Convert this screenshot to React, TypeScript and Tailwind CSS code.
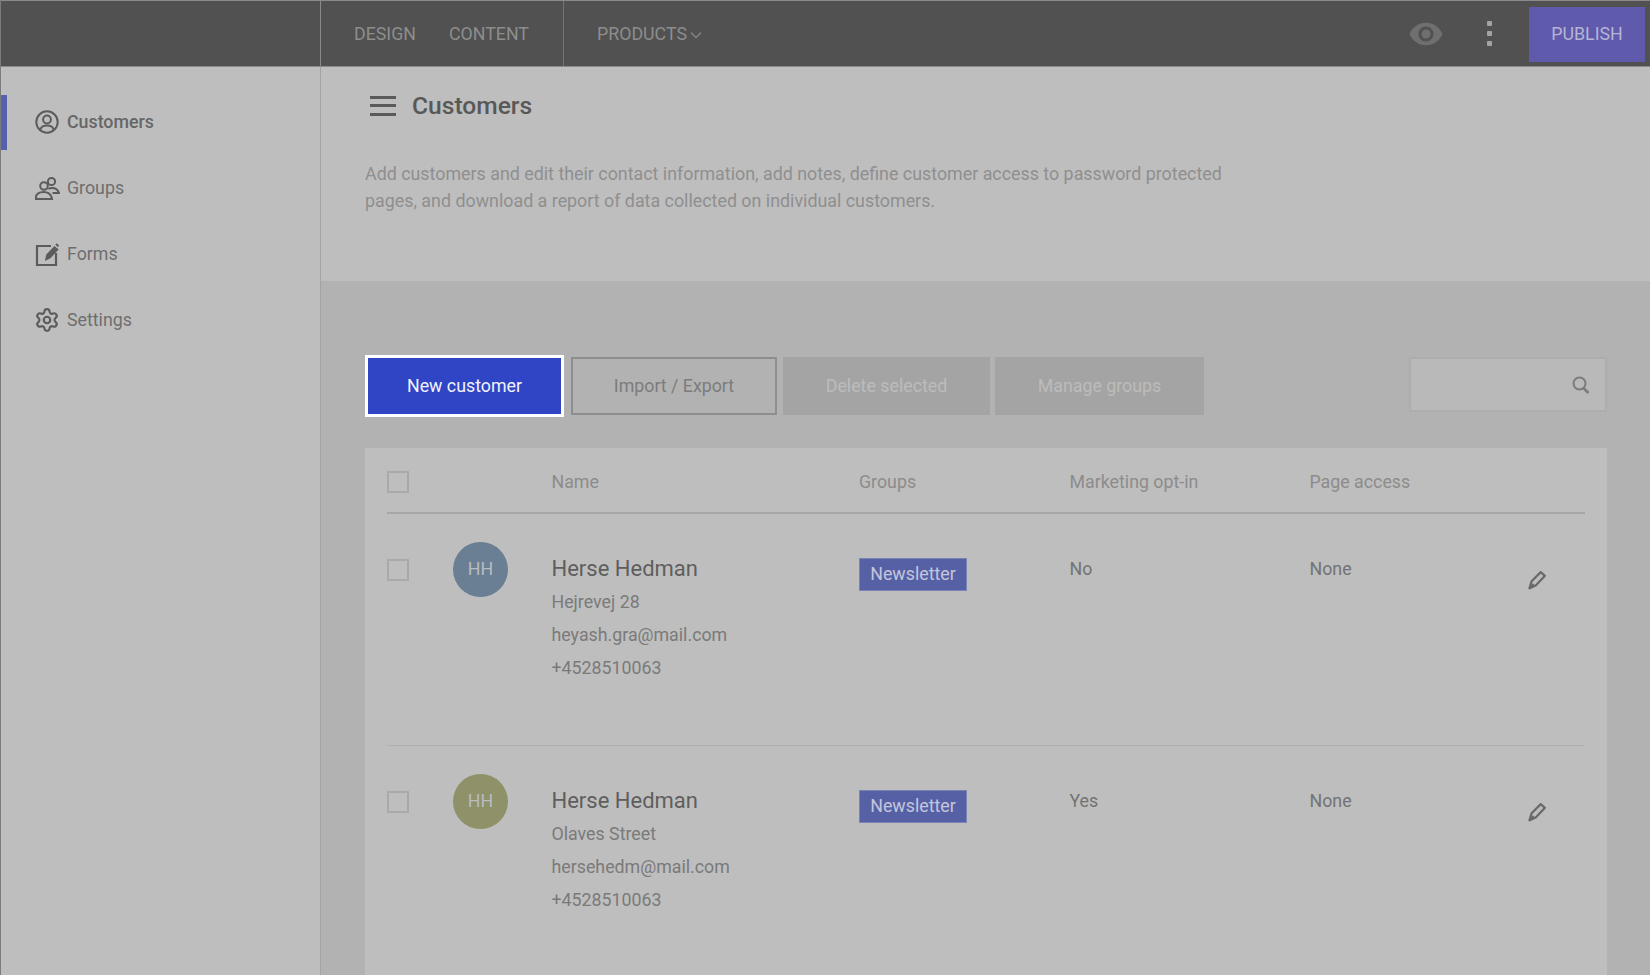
import React from "react";
import { Settings } from "lucide-react";

function CustomerIcon() {
  return (
    <svg width="24" height="24" viewBox="0 0 24 24" fill="none" stroke="#5c5c5c" strokeWidth="2" className="-mt-[2px]">
      <circle cx="12" cy="12" r="10.700" />
      <circle cx="12" cy="9.500" r="3.900" />
      <path d="M5.500 19.500c.6-2.800 3-4 6.500-4s5.900 1.200 6.500 4" />
    </svg>
  );
}
function GroupIcon() {
  return (
    <svg width="25" height="24" viewBox="0 0 25 24" fill="none" stroke="#5c5c5c" strokeWidth="2" className="-mt-[2px]">
      <circle cx="9" cy="10" r="3.800" />
      <circle cx="16.500" cy="5.500" r="3.600" />
      <path d="M1 23v-1.500c0-3.500 3.200-5.500 7.500-5.500s7 1.500 8.200 5.500l.3 1.500zM13.500 13c1-.8 1.800-1 3.500-1 3.500 0 6 1.800 7 5h-6.500" />
    </svg>
  );
}
function FormIcon() {
  return (
    <svg width="25" height="24" viewBox="0 0 25 24" fill="none" stroke="#5c5c5c" strokeWidth="2.200" className="-mt-[2px]">
      <path d="M16 4H2v19h19V11" />
      <path d="M11 17.500l1-4.500 7.500-8 3 2.500-7.500 8z" fill="#5c5c5c" strokeWidth="1.600" />
      <path d="M21 2l2.500 2.200" strokeWidth="2" />
    </svg>
  );
}
function Pencil() {
  return (
    <svg width="20" height="20" viewBox="0 0 24 24" fill="none" stroke="#6a6a6a" strokeWidth="2.700" strokeLinejoin="round">
      <path d="M3 22l2.500-8.500L16.500 2.500l5 4.500L10.500 18.500z" />
      <path d="M3 22l5-5" />
    </svg>
  );
}
function SearchIcon() {
  return (
    <svg width="18" height="18" viewBox="0 0 18 18" fill="none" stroke="#7c7c7c" strokeWidth="2">
      <circle cx="7.500" cy="7.500" r="6" />
      <path d="M11.500 12l5 5" strokeWidth="2.600" />
    </svg>
  );
}
function Eye() {
  return (
    <svg width="36" height="36" viewBox="0 0 24 24" fill="#6f6f6f">
      <path d="M12 4.500C7 4.500 2.730 7.610 1 12c1.730 4.390 6 7.500 11 7.500s9.270-3.110 11-7.500c-1.730-4.390-6-7.500-11-7.500zM12 17c-2.760 0-5-2.240-5-5s2.240-5 5-5 5 2.240 5 5-2.240 5-5 5zm0-8c-1.660 0-3 1.340-3 3s1.340 3 3 3 3-1.340 3-3-1.340-3-3-3z" />
    </svg>
  );
}

function Checkbox() {
  return <div className="h-[22px] w-[22px] shrink-0 border-2 border-[#a9a9a9]" />;
}

const rows = [
  { color: "bg-[#6a7f93]", addr: "Hejrevej 28", mail: "heyash.gra@mail.com", opt: "No" },
  { color: "bg-[#8f9168]", addr: "Olaves Street", mail: "hersehedm@mail.com", opt: "Yes" },
];

function Row({ r, last }: { r: (typeof rows)[number]; last: boolean }) {
  return (
    <div className={`flex h-[232px] items-start ${last ? "" : "border-b border-[#b0b0b0]"}`}>
      <div className="mt-[45px] w-[66px] shrink-0">
        <Checkbox />
      </div>
      <div
        className={`mt-[28px] flex h-[55px] w-[55px] shrink-0 items-center justify-center rounded-full text-[17.800px] text-[#b9bcc0] ${r.color}`}
      >
        HH
      </div>
      <div className="ml-[43.500px] mt-[38px] w-[307.500px] shrink-0 text-[17.800px] text-[#7a7a7a]">
        <div className="h-[33px] text-[22px] leading-[33px] text-[#5e5e5e]">Herse Hedman</div>
        <div className="h-[33px] leading-[33px]">{r.addr}</div>
        <div className="h-[33px] leading-[33px]">{r.mail}</div>
        <div className="h-[33px] leading-[33px]">+4528510063</div>
      </div>
      <div className="mt-[44px] w-[210.500px] shrink-0">
        <div className="flex h-[33px] w-[108px] items-center justify-center border border-[#7a82b8] bg-[#5660a4] text-[17.800px] text-[#c3c6dc]">
          Newsletter
        </div>
      </div>
      <div className="mt-[40px] w-[240px] shrink-0 text-[17.800px] leading-[30px] text-[#737373]">{r.opt}</div>
      <div className="mt-[40px] w-[217px] shrink-0 text-[17.800px] leading-[30px] text-[#737373]">None</div>
      <div className="mt-[56px] shrink-0">
        <Pencil />
      </div>
    </div>
  );
}

export default function App() {
  return (
    <div
      className="flex h-screen w-full flex-col overflow-hidden border-l border-[#7c7c7c] bg-[#b2b2b2]"
      style={{ fontFamily: "Roboto, sans-serif" }}
    >
      <header className="flex h-[67px] shrink-0 items-center border-y border-[#8a8a8a] bg-[#515151] text-[17.800px] text-[#8d8d8d]">
        <div className="h-full w-[320px] shrink-0 border-r border-[#8a8a8a]" />
        <nav className="flex h-full w-[243px] shrink-0 items-center gap-[33px] border-r border-[#757575] pl-[33px] pt-[2px]">
          <span>DESIGN</span>
          <span>CONTENT</span>
        </nav>
        <div className="ml-[33px] mt-[2px] flex items-center gap-[3px]">
          <span>PRODUCTS</span>
          <svg width="12" height="8" viewBox="0 0 12 8" fill="none" stroke="#808080" strokeWidth="1.600">
            <path d="M1 1.500l5 5 5-5" />
          </svg>
        </div>
        <div className="ml-auto flex h-full items-center">
          <Eye />
          <div className="ml-[43px] flex flex-col gap-[5px]">
            <i className="block h-[5px] w-[5px] rounded-[1px] bg-[#a3a3a3]" />
            <i className="block h-[5px] w-[5px] rounded-[1px] bg-[#a3a3a3]" />
            <i className="block h-[5px] w-[5px] rounded-[1px] bg-[#a3a3a3]" />
          </div>
          <button className="ml-[37px] mr-[5px] mt-[2px] flex h-[55px] w-[116px] items-center justify-center bg-[#5f5aab] text-[#b6b4d6]">
            PUBLISH
          </button>
        </div>
      </header>

      <div className="flex min-h-0 flex-1">
        <aside className="w-[320px] shrink-0 border-r border-[#a3a3a3] bg-[#bebebe] pt-[28px] text-[17.800px] text-[#6e6e6e]">
          <div className="flex h-[55px] items-center border-l-[6px] border-[#5560ae] pl-[28px]">
            <CustomerIcon />
            <span className="ml-[8px] font-medium text-[#666]">Customers</span>
          </div>
          <div className="mt-[11px] flex h-[55px] items-center pl-[34px]">
            <GroupIcon />
            <span className="ml-[7px]">Groups</span>
          </div>
          <div className="mt-[11px] flex h-[55px] items-center pl-[34px]">
            <FormIcon />
            <span className="ml-[7px]">Forms</span>
          </div>
          <div className="mt-[11px] flex h-[55px] items-center pl-[34px]">
            <Settings size={26} color="#5c5c5c" strokeWidth={2} className="-ml-[1px] -mt-[2px]" />
            <span className="ml-[7px]">Settings</span>
          </div>
        </aside>

        <main className="flex min-w-0 flex-1 flex-col">
          <section className="h-[214px] shrink-0 bg-[#bebebe] pl-[44px]">
            <div className="flex items-center pt-[27px]">
              <svg width="26" height="20" viewBox="0 0 26 20" fill="#5a5a5a" className="ml-[5px]">
                <rect x="0" y="0" width="26" height="3" />
                <rect x="0" y="8" width="26" height="3" />
                <rect x="0" y="17" width="26" height="3" />
              </svg>
              <h1 className="ml-[16px] text-[24.600px] font-medium leading-[24px] text-[#585858]">Customers</h1>
            </div>
            <p className="mt-[42px] w-[880px] text-[17.850px] leading-[27px] text-[#8f8f8f]">
              Add customers and edit their contact information, add notes, define customer access to password protected
              <br />
              pages, and download a report of data collected on individual customers.
            </p>
          </section>

          <section className="flex min-h-0 flex-1 flex-col pl-[44px] pr-[43px] pt-[74px]">
            <div className="flex h-[62px] shrink-0 items-center text-[17.800px]">
              <button className="flex h-[62px] w-[199px] items-center justify-center border-[3px] border-white bg-[#2f45c5] text-[#f1f2fb]">
                New customer
              </button>
              <button className="ml-[7px] flex h-[58px] w-[206px] items-center justify-center border-2 border-[#8e8e8e] text-[#7c7c7c]">
                Import / Export
              </button>
              <button className="ml-[6px] flex h-[58px] w-[207px] items-center justify-center bg-[#a4a4a4] text-[#bcbcbc]">
                Delete selected
              </button>
              <button className="ml-[5px] flex h-[58px] w-[209px] items-center justify-center bg-[#a4a4a4] text-[#bcbcbc]">
                Manage groups
              </button>
              <div className="ml-auto mt-[2px] flex h-[55px] w-[198px] items-center justify-end self-start border-2 border-[#a8a8a8]/70 bg-[#b9b9b9] pr-[15px]">
                <SearchIcon />
              </div>
            </div>

            <div className="mt-[31px] flex-1 bg-[#bebebe] px-[22px]">
              <div className="flex h-[66px] items-center border-b-2 border-[#a6a6a6] pt-[3px] text-[17.800px] text-[#8c8c8c]">
                <div className="w-[164.500px] shrink-0">
                  <Checkbox />
                </div>
                <span className="w-[307.500px] shrink-0 pt-[1px]">Name</span>
                <span className="w-[210.500px] shrink-0 pt-[1px]">Groups</span>
                <span className="w-[240px] shrink-0 pt-[1px]">Marketing opt-in</span>
                <span className="pt-[1px]">Page access</span>
              </div>
              {rows.map((r, i) => (
                <Row key={i} r={r} last={i === 1} />
              ))}
            </div>
          </section>
        </main>
      </div>
    </div>
  );
}
